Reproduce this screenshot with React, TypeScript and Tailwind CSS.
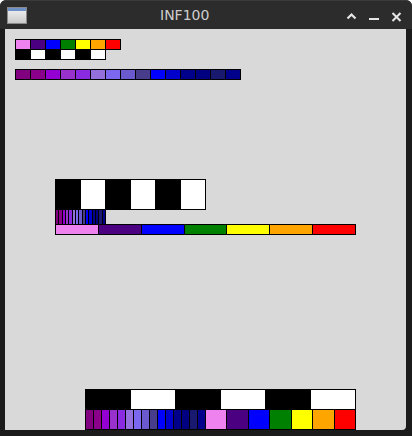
import React from "react";

const RAINBOW = [
  "bg-[#ee82ee]",
  "bg-[#4b0082]",
  "bg-[#0000ff]",
  "bg-[#008000]",
  "bg-[#ffff00]",
  "bg-[#ffa500]",
  "bg-[#ff0000]",
];

const BW = ["bg-black", "bg-white", "bg-black", "bg-white", "bg-black", "bg-white"];

const PURPLES = [
  "bg-[#800080]",
  "bg-[#8b008b]",
  "bg-[#9400d3]",
  "bg-[#9932cc]",
  "bg-[#8a2be2]",
  "bg-[#9370db]",
  "bg-[#7b68ee]",
  "bg-[#6a5acd]",
  "bg-[#483d8b]",
  "bg-[#0000ff]",
  "bg-[#0000cd]",
  "bg-[#00008b]",
  "bg-[#000080]",
  "bg-[#191970]",
  "bg-[#00008b]",
];

function Strip({ pos, colors }: { pos: string; colors: string[] }) {
  return (
    <div className={`absolute flex bg-black p-px gap-px ${pos}`}>
      {colors.map((c, i) => (
        <div key={i} className={`flex-1 min-w-0 ${c}`} />
      ))}
    </div>
  );
}

export default function App() {
  return (
    <div
      className="w-[412px] h-[436px] bg-[#1b1b1b] flex flex-col overflow-hidden rounded-t-[6px]"
      style={{ fontFamily: '"DejaVu Sans", sans-serif' }}
    >
      {/* Title bar */}
      <div className="h-[29px] shrink-0 bg-[#2c2c2c] rounded-t-[6px] border-t border-[#3a3a3a] flex items-center relative">
        <svg className="absolute left-[7px] top-[6px]" width="20" height="17" viewBox="0 0 20 17">
          <defs>
            <linearGradient id="wb" x1="0" y1="0" x2="0" y2="1">
              <stop offset="0" stopColor="#f4f4f4" />
              <stop offset="1" stopColor="#c9c9c9" />
            </linearGradient>
          </defs>
          <rect x="0.5" y="0.5" width="19" height="16" fill="url(#wb)" stroke="#8a8a8a" />
          <rect x="1" y="1" width="18" height="3" fill="#6f90c6" />
        </svg>
        <div className="absolute left-[160px] top-[5px] text-[14px] leading-[18px] text-[#cfcfcf]">
          INF100
        </div>
        <svg className="absolute left-[346px] top-[11px]" width="11" height="8" viewBox="0 0 11 8">
          <path d="M1.5 6.5 L5.5 2.5 L9.5 6.5" fill="none" stroke="#e6e6e6" strokeWidth="2.2" />
        </svg>
        <div className="absolute left-[369px] top-[17px] w-[10px] h-[2px] bg-[#e6e6e6]" />
        <svg className="absolute left-[391px] top-[11px]" width="11" height="10" viewBox="0 0 11 10">
          <path d="M1.5 1 L9.5 9 M9.5 1 L1.5 9" fill="none" stroke="#e6e6e6" strokeWidth="2" />
        </svg>
      </div>
      {/* Body */}
      <div className="relative ml-[5px] mr-[6px] h-[401px] bg-[#d9d9d9] rounded-br-[4px]">
        <Strip pos="left-[10px] top-[10px] w-[106px] h-[11px]" colors={RAINBOW} />
        <Strip pos="left-[10px] top-[20px] w-[91px] h-[11px]" colors={BW} />
        <Strip pos="left-[10px] top-[40px] w-[226px] h-[11px]" colors={PURPLES} />
        <Strip pos="left-[50px] top-[150px] w-[151px] h-[31px]" colors={BW} />
        <Strip pos="left-[50px] top-[180px] w-[51px] h-[16px]" colors={PURPLES} />
        <Strip pos="left-[50px] top-[195px] w-[301px] h-[11px]" colors={RAINBOW} />
        <Strip pos="left-[80px] top-[360px] w-[271px] h-[21px]" colors={BW} />
        <Strip pos="left-[80px] top-[380px] w-[121px] h-[21px]" colors={PURPLES} />
        <Strip pos="left-[200px] top-[380px] w-[151px] h-[21px]" colors={RAINBOW} />
      </div>
    </div>
  );
}
